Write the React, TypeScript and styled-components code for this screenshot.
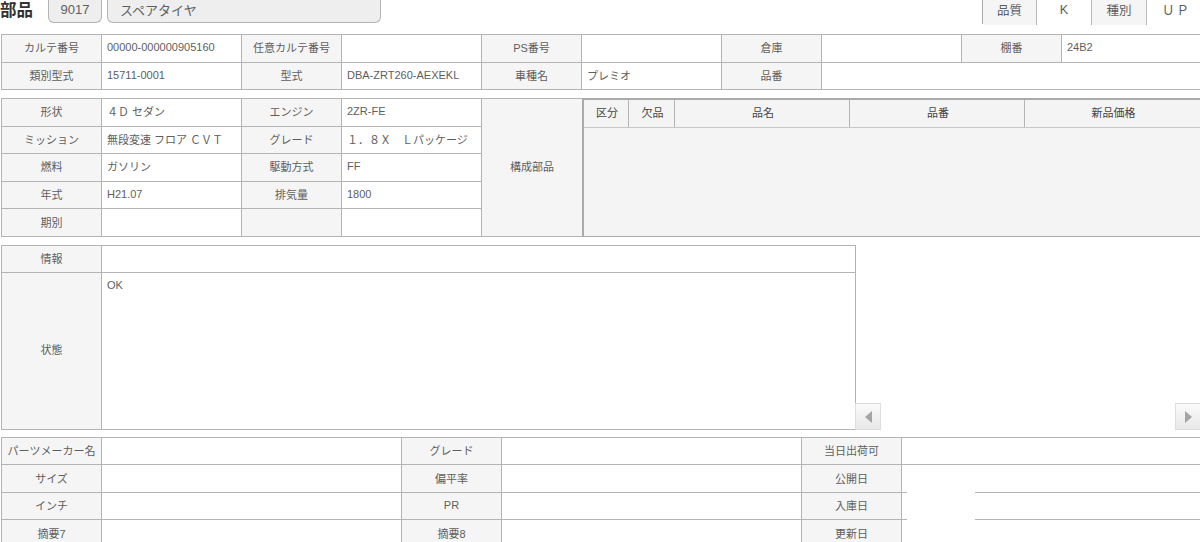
import React from 'react'
import styled, { createGlobalStyle } from 'styled-components'

const GlobalStyle = createGlobalStyle`
  html, body {
    margin: 0;
    padding: 0;
    background: #fff;
    overflow: hidden;
  }
  body {
    font-family: 'Liberation Sans', 'Noto Sans CJK JP', sans-serif;
    font-size: 11px;
    color: #5e5e5e;
  }
`

const Page = styled.div`
  width: 1200px;
  height: 542px;
  overflow: hidden;
  padding-left: 1px;
  box-sizing: border-box;
  position: relative;
`

const TopBar = styled.div`
  display: flex;
  align-items: flex-start;
  height: 34px;
  margin-left: -1px;
`

const Heading = styled.h1`
  font-size: 16.5px;
  line-height: 20px;
  font-weight: bold;
  color: #333;
  margin: 0 15px 0 0;
`

const Pill = styled.div<{ $width: number }>`
  width: ${props => props.$width}px;
  height: 24px;
  margin: -1px 5px 0 0;
  padding: 0 0 2px ${props => (props.$width > 100 ? 12 : 0)}px;
  box-sizing: border-box;
  display: flex;
  align-items: center;
  justify-content: ${props => (props.$width > 100 ? 'flex-start' : 'center')};
  background: #eee;
  border: 1px solid #b4b4b4;
  border-top: 0;
  border-radius: 0 0 6px 6px;
  font-size: 13px;
  color: #5e5e5e;
`

const QualityBox = styled.div`
  margin-left: auto;
  display: grid;
  grid-template-columns: 54px 55px 55px 53px;
  height: 24px;
  box-sizing: border-box;
  border-left: 1px solid #aaa;
  border-bottom: 1px solid #aaa;
`

const QualityCell = styled.div<{ $label?: boolean }>`
  display: flex;
  align-items: center;
  justify-content: center;
  padding-bottom: 6px;
  font-size: 12.5px;
  background: ${props => (props.$label ? '#f5f5f5' : '#fff')};
  border-right: 1px solid #bbb;
  &:last-child {
    border-right: 0;
    padding-left: 6px;
    letter-spacing: 2px;
  }
`

const Table = styled.table<{ $width: number }>`
  width: ${props => props.$width}px;
  table-layout: fixed;
  border-collapse: collapse;
  flex: none;
`

const SpacedTable = styled(Table)`
  margin-bottom: 8px;
`

const Col = styled.col<{ $width: number }>`
  width: ${props => props.$width}px;
`

const Row = styled.tr<{ $height?: number }>`
  height: ${props => props.$height ?? 27.5}px;
`

const Label = styled.th<{ $tall?: boolean }>`
  padding: 0 0 ${props => (props.$tall ? 4 : 2)}px;
  font-weight: normal;
  text-align: center;
  background: #f5f5f5;
  border: 1px solid #b4b4b4;
  box-sizing: border-box;
  white-space: nowrap;
`

const Value = styled.td<{ $top?: boolean }>`
  padding: ${props => (props.$top ? '6px 5px 0' : '0 5px 2px')};
  vertical-align: ${props => (props.$top ? 'top' : 'middle')};
  background: #fff;
  border: 1px solid #b4b4b4;
  box-sizing: border-box;
  white-space: nowrap;
  overflow: hidden;
`

const SpecSection = styled.div`
  display: flex;
  align-items: stretch;
  margin-bottom: 8px;
`

const PartsPanel = styled.div`
  flex: none;
  width: 620px;
  height: 139px;
  margin-left: -1px;
  box-sizing: border-box;
  display: flex;
  flex-direction: column;
  background: #f4f4f4;
  border-top: 2px solid #aaa;
  border-left: 2px solid #aaa;
  border-bottom: 1px solid #aaa;
`

const PartsHead = styled.div`
  display: grid;
  grid-template-columns: 45px 46px 175px 175px 175px;
  height: 27px;
  flex: none;
  border-bottom: 1px solid #c8c8c8;
`

const PartsHeadCell = styled.div`
  display: flex;
  align-items: center;
  justify-content: center;
  padding: 0 0 3px 2px;
  color: #444;
  border-right: 1px solid #b4b4b4;
  &:last-child {
    border-right: 0;
  }
`

const ConditionSection = styled.div`
  display: flex;
  align-items: flex-end;
  margin-bottom: 7px;
`

const ScrollControls = styled.div`
  flex: 1;
  margin: 0 -1px;
  display: flex;
  justify-content: space-between;
`

const ScrollButton = styled.button<{ $dir: 'left' | 'right' }>`
  width: 26px;
  height: 27px;
  padding: 0;
  display: flex;
  align-items: center;
  justify-content: center;
  border: 1px solid #ddd;
  background: linear-gradient(#fafafa, #e8e8e8);
  &::before {
    content: '';
    border-style: solid;
    border-color: transparent;
    border-width: 6px 0 6px 7px;
    border-left-color: #a4a4a4;
    transform: ${props => (props.$dir === 'left' ? 'rotate(180deg)' : 'none')};
  }
`

const BottomSection = styled.div`
  position: relative;
`

// 画像側で罫線が消されている箇所
const LineMask = styled.div`
  position: absolute;
  left: 906px;
  top: 48px;
  width: 68px;
  height: 40px;
  background: #fff;
`

export default function App () {
  return (
    <Page>
      <GlobalStyle />
      <TopBar>
        <Heading>部品</Heading>
        <Pill $width={54}>9017</Pill>
        <Pill $width={274}>スペアタイヤ</Pill>
        <QualityBox>
          <QualityCell $label>品質</QualityCell>
          <QualityCell>K</QualityCell>
          <QualityCell $label>種別</QualityCell>
          <QualityCell>ＵＰ</QualityCell>
        </QualityBox>
      </TopBar>

      <SpacedTable $width={1220}>
        <colgroup>
          <Col $width={100} />
          <Col $width={140} />
          <Col $width={100} />
          <Col $width={140} />
          <Col $width={100} />
          <Col $width={140} />
          <Col $width={100} />
          <Col $width={140} />
          <Col $width={100} />
          <Col $width={160} />
        </colgroup>
        <tbody>
          <Row>
            <Label>カルテ番号</Label>
            <Value>00000-000000905160</Value>
            <Label>任意カルテ番号</Label>
            <Value />
            <Label>PS番号</Label>
            <Value />
            <Label>倉庫</Label>
            <Value />
            <Label>棚番</Label>
            <Value>24B2</Value>
          </Row>
          <Row>
            <Label>類別型式</Label>
            <Value>15711-0001</Value>
            <Label>型式</Label>
            <Value>DBA-ZRT260-AEXEKL</Value>
            <Label>車種名</Label>
            <Value>プレミオ</Value>
            <Label>品番</Label>
            <Value colSpan={3} />
          </Row>
        </tbody>
      </SpacedTable>

      <SpecSection>
        <Table $width={581}>
          <colgroup>
            <Col $width={100} />
            <Col $width={140} />
            <Col $width={100} />
            <Col $width={140} />
            <Col $width={101} />
          </colgroup>
          <tbody>
            <Row>
              <Label>形状</Label>
              <Value>４Ｄ セダン</Value>
              <Label>エンジン</Label>
              <Value>2ZR-FE</Value>
              <Label $tall rowSpan={5}>構成部品</Label>
            </Row>
            <Row>
              <Label>ミッション</Label>
              <Value>無段変速 フロア ＣＶＴ</Value>
              <Label>グレード</Label>
              <Value>１．８Ｘ　Ｌパッケージ</Value>
            </Row>
            <Row>
              <Label>燃料</Label>
              <Value>ガソリン</Value>
              <Label>駆動方式</Label>
              <Value>FF</Value>
            </Row>
            <Row>
              <Label>年式</Label>
              <Value>H21.07</Value>
              <Label>排気量</Label>
              <Value>1800</Value>
            </Row>
            <Row>
              <Label>期別</Label>
              <Value />
              <Label />
              <Value />
            </Row>
          </tbody>
        </Table>
        <PartsPanel>
          <PartsHead>
            <PartsHeadCell>区分</PartsHeadCell>
            <PartsHeadCell>欠品</PartsHeadCell>
            <PartsHeadCell>品名</PartsHeadCell>
            <PartsHeadCell>品番</PartsHeadCell>
            <PartsHeadCell>新品価格</PartsHeadCell>
          </PartsHead>
        </PartsPanel>
      </SpecSection>

      <ConditionSection>
        <Table $width={854}>
          <colgroup>
            <Col $width={100} />
            <Col $width={754} />
          </colgroup>
          <tbody>
            <Row $height={27}>
              <Label>情報</Label>
              <Value />
            </Row>
            <Row $height={157}>
              <Label $tall>状態</Label>
              <Value $top>OK</Value>
            </Row>
          </tbody>
        </Table>
        <ScrollControls>
          <ScrollButton $dir="left" aria-label="前へ" />
          <ScrollButton $dir="right" aria-label="次へ" />
        </ScrollControls>
      </ConditionSection>

      <BottomSection>
        <Table $width={1220}>
          <colgroup>
            <Col $width={100} />
            <Col $width={300} />
            <Col $width={100} />
            <Col $width={300} />
            <Col $width={100} />
            <Col $width={320} />
          </colgroup>
          <tbody>
            <Row $height={27}>
              <Label>パーツメーカー名</Label>
              <Value />
              <Label>グレード</Label>
              <Value />
              <Label>当日出荷可</Label>
              <Value />
            </Row>
            <Row $height={28}>
              <Label>サイズ</Label>
              <Value />
              <Label>偏平率</Label>
              <Value />
              <Label>公開日</Label>
              <Value />
            </Row>
            <Row $height={27}>
              <Label>インチ</Label>
              <Value />
              <Label>PR</Label>
              <Value />
              <Label>入庫日</Label>
              <Value />
            </Row>
            <Row $height={28}>
              <Label>摘要7</Label>
              <Value />
              <Label>摘要8</Label>
              <Value />
              <Label>更新日</Label>
              <Value />
            </Row>
          </tbody>
        </Table>
        <LineMask />
      </BottomSection>
    </Page>
  )
}
